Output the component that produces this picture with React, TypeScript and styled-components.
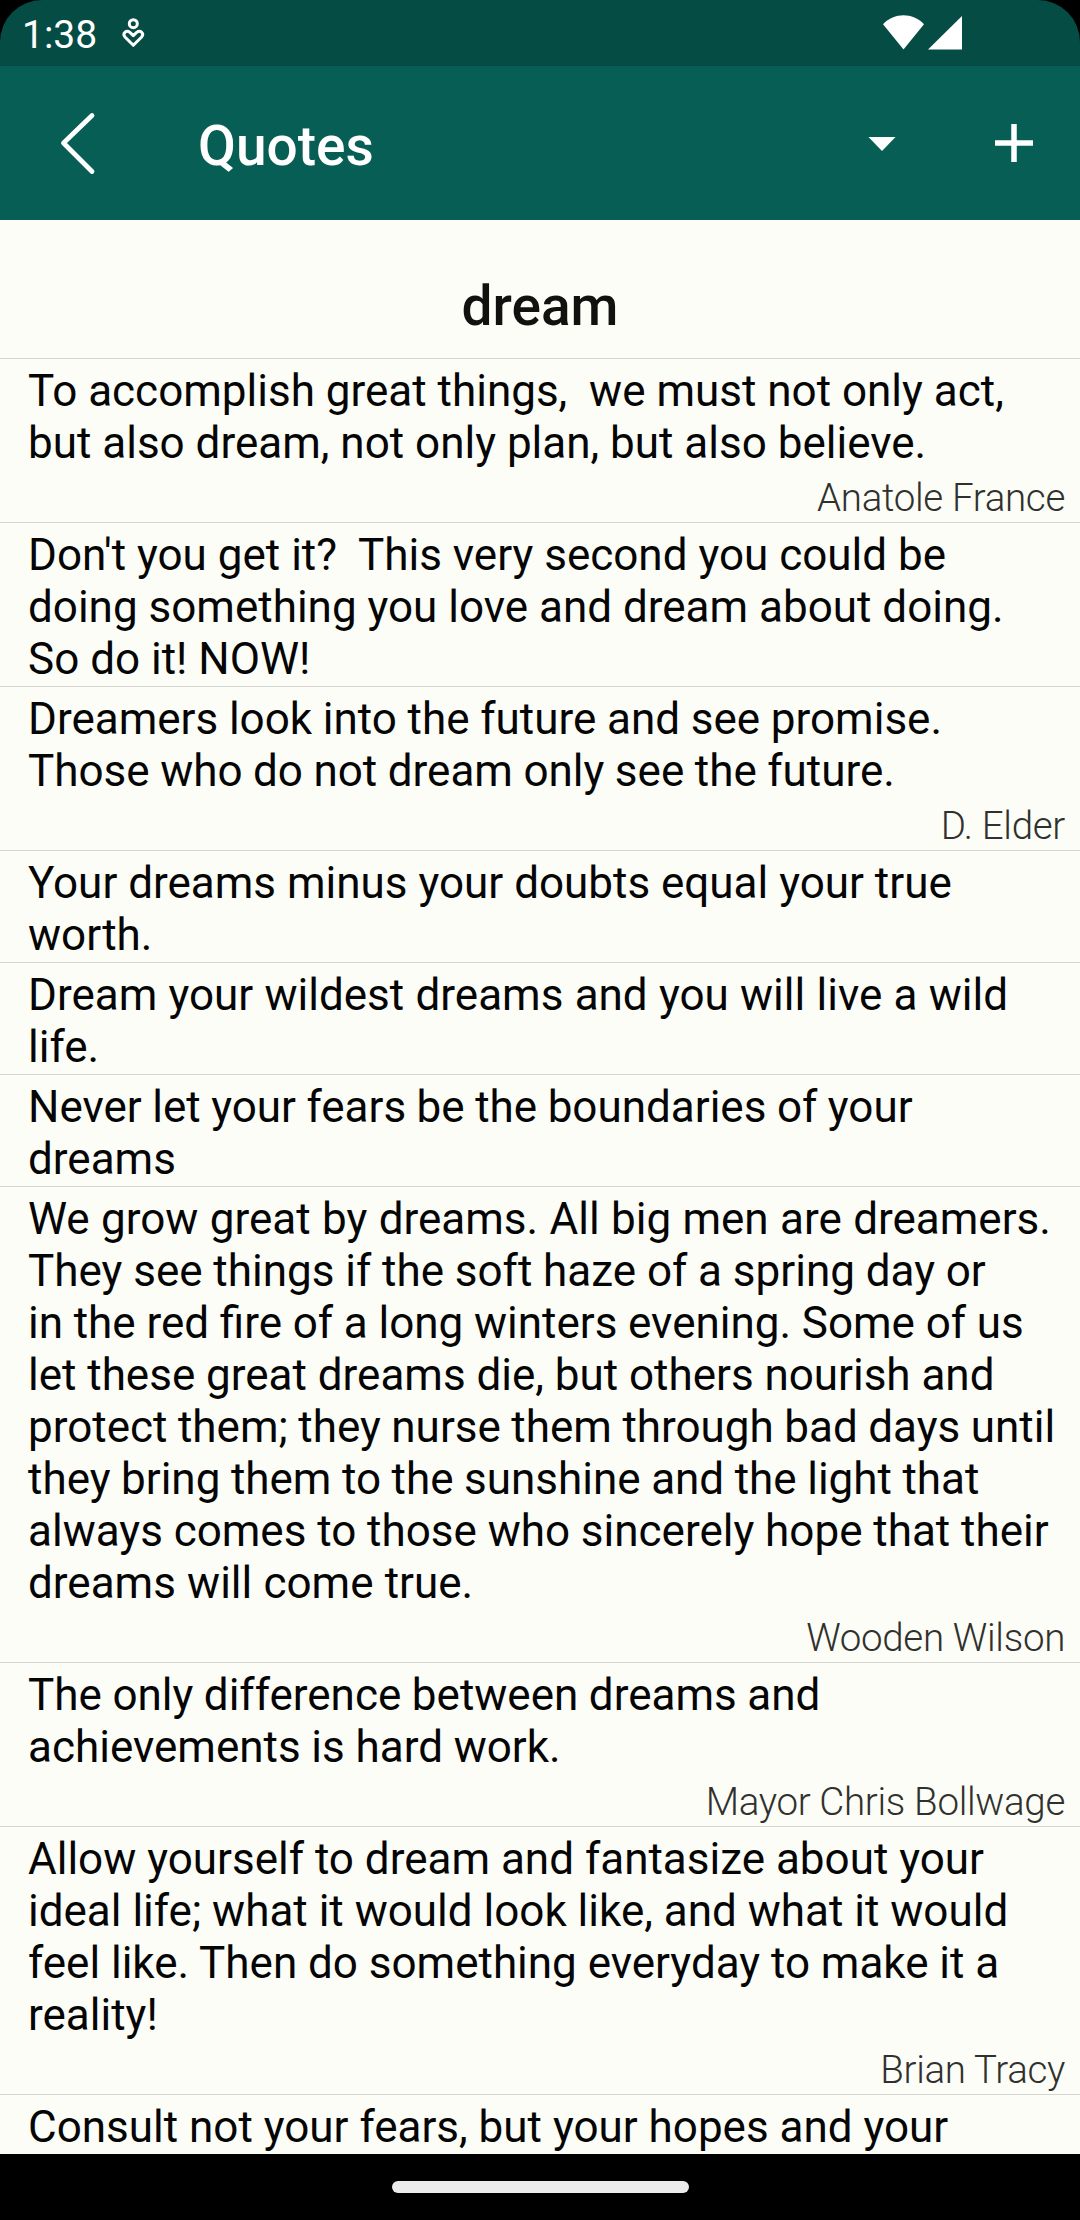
import React from "react";
import styled, { createGlobalStyle } from "styled-components";

const GlobalStyle = createGlobalStyle`
  html, body { margin: 0; padding: 0; background: #000; }
  * { box-sizing: border-box; }
`;

const Screen = styled.div`
  display: flex;
  flex-direction: column;
  width: 1080px;
  height: 2220px;
  overflow: hidden;
  background: #000;
  font-family: Roboto, "Noto Sans", sans-serif;
`;

const StatusBar = styled.header`
  display: flex;
  align-items: flex-start;
  flex: none;
  height: 66px;
  padding: 0 117px 0 22px;
  background: #054c44;
  border-radius: 42px 42px 0 0;
`;

const Clock = styled.span`
  width: 78px;
  padding-top: 12px;
  font-size: 39px;
  line-height: 46px;
  color: #fff;
  white-space: nowrap;
`;

const CareIcon = styled.svg`
  margin: 17px auto 0 22px;
`;

const SignalIcons = styled.svg`
  margin-top: 14px;
`;

const AppBar = styled.nav`
  display: flex;
  align-items: center;
  flex: none;
  height: 154px;
  background: #075e54;
  color: #fff;
`;

const IconButton = styled.button<{ $width: number }>`
  display: flex;
  align-items: center;
  justify-content: center;
  width: ${(p) => p.$width}px;
  height: 154px;
  padding: 0;
  border: 0;
  background: transparent;
  color: inherit;
`;

const AppTitle = styled.h1`
  flex: 1;
  margin: 0;
  padding: 6px 0 0 42px;
  font-size: 55px;
  font-weight: 500;
  line-height: 64px;
`;

const Content = styled.main`
  flex: none;
  height: 1934px;
  overflow: hidden;
  background: #fcfdf7;
`;

const Topic = styled.h2`
  height: 139px;
  margin: 0;
  padding-top: 54px;
  border-bottom: 1px solid #d4d5d0;
  font-size: 55px;
  font-weight: 500;
  line-height: 64px;
  text-align: center;
  color: #111210;
`;

const QuoteItem = styled.article`
  padding: 6px 15px 1px 28px;
  border-bottom: 1px solid #d4d5d0;
`;

const QuoteText = styled.p`
  margin: 0;
  font-size: 44px;
  line-height: 52px;
  color: #050505;
`;

const QuoteLine = styled.span<{ $wordGap: number }>`
  display: block;
  white-space: pre;
  word-spacing: ${(p) => p.$wordGap}px;
`;

const Author = styled.p`
  height: 52px;
  margin: 0;
  padding-top: 6px;
  font-size: 38.5px;
  font-weight: 300;
  line-height: 46px;
  letter-spacing: -0.32px;
  text-align: right;
  color: #30312e;
`;

const NavigationBar = styled.footer`
  display: flex;
  align-items: center;
  justify-content: center;
  flex: 1;
  background: #000;
`;

const HomeHandle = styled.div`
  width: 297px;
  height: 12px;
  border-radius: 6px;
  background: #ececec;
`;

/** A line of text, and the pixels added to each of its word gaps. */
type Line = [text: string, wordGap?: number];

interface Quote {
  lines: Line[];
  author?: string;
}

const quotes: Quote[] = [
  {
    lines: [["To accomplish great things,  we must not only act,"], ["but also dream, not only plan, but also believe."]],
    author: "Anatole France",
  },
  {
    lines: [
      ["Don't you get it?  This very second you could be"],
      ["doing something you love and dream about doing."],
      ["So do it! NOW!"],
    ],
  },
  {
    lines: [
      ["Dreamers look into the future and see promise.", -0.2],
      ["Those who do not dream only see the future.", -0.4],
    ],
    author: "D. Elder",
  },
  { lines: [["Your dreams minus your doubts equal your true"], ["worth."]] },
  { lines: [["Dream your wildest dreams and you will live a wild", 0.35], ["life."]] },
  { lines: [["Never let your fears be the boundaries of your", -0.4], ["dreams"]] },
  {
    lines: [
      ["We grow great by dreams. All big men are dreamers.", 0.45],
      ["They see things if the soft haze of a spring day or", -0.1],
      ["in the red fire of a long winters evening. Some of us", -0.2],
      ["let these great dreams die, but others nourish and", -0.1],
      ["protect them; they nurse them through bad days until", -0.4],
      ["they bring them to the sunshine and the light that", -0.38],
      ["always comes to those who sincerely hope that their", -0.1],
      ["dreams will come true.", 0.3],
    ],
    author: "Wooden Wilson",
  },
  {
    lines: [["The only difference between dreams and", -0.35], ["achievements is hard work.", -0.2]],
    author: "Mayor Chris Bollwage",
  },
  {
    lines: [
      ["Allow yourself to dream and fantasize about your"],
      ["ideal life; what it would look like, and what it would"],
      ["feel like. Then do something everyday to make it a", -0.1],
      ["reality!"],
    ],
    author: "Brian Tracy",
  },
  { lines: [["Consult not your fears, but your hopes and your"]] },
];

export default function App() {
  return (
    <>
      <GlobalStyle />
      <Screen>
        <StatusBar>
          <Clock>1:38</Clock>
          <CareIcon width="24" height="32" viewBox="0 0 24 32" fill="none" stroke="#fff" strokeWidth="3">
            <circle cx="11.3" cy="6.7" r="4" />
            <path
              d="M11.3 28.3 3.2 20.3C-0.2 16.4 4.3 12.6 7.9 15.4L11.3 18.6 14.7 15.4C18.3 12.6 22.8 16.4 19.4 20.3Z"
              strokeLinejoin="round"
            />
          </CareIcon>
          <SignalIcons width="80" height="38" viewBox="0 0 80 38" fill="#fff">
            <path d="M0 10.3C11.5-1.6 29.5-1.6 41 10.3L20.5 35.5Z" />
            <path d="M45 35.5H79V2Z" />
          </SignalIcons>
        </StatusBar>
        <AppBar>
          <IconButton $width={156} aria-label="Back">
            <svg width="40" height="64" viewBox="0 0 40 64" fill="none" stroke="#fff" strokeWidth="4.8" strokeLinecap="round" strokeLinejoin="round">
              <path d="M34 4.5 5.5 32 34 60.5" />
            </svg>
          </IconButton>
          <AppTitle>Quotes</AppTitle>
          <IconButton $width={132} aria-label="Filter">
            <svg width="28" height="16" viewBox="0 0 28 16" fill="#fff">
              <path d="M0.5 2H27.5L14 16Z" />
            </svg>
          </IconButton>
          <IconButton $width={132} aria-label="Add">
            <svg width="40" height="40" viewBox="0 0 40 40" fill="none" stroke="#fff" strokeWidth="5.5">
              <path d="M1 20H39M20 1V39" />
            </svg>
          </IconButton>
        </AppBar>
        <Content>
          <Topic>dream</Topic>
          {quotes.map((quote) => (
            <QuoteItem key={quote.lines[0][0]}>
              <QuoteText>
                {quote.lines.map(([text, wordGap = 0]) => (
                  <QuoteLine key={text} $wordGap={wordGap}>
                    {text}
                  </QuoteLine>
                ))}
              </QuoteText>
              {quote.author && <Author>{quote.author}</Author>}
            </QuoteItem>
          ))}
        </Content>
        <NavigationBar>
          <HomeHandle />
        </NavigationBar>
      </Screen>
    </>
  );
}
